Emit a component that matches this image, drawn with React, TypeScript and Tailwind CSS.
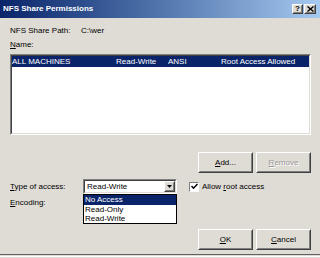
import React from 'react';

const Raised: React.FC<{ className?: string; children?: React.ReactNode }> = ({ className = '', children }) => (
  <div className={`border border-t-white border-l-white border-r-[#404040] border-b-[#404040] bg-[#dfdcd5] ${className}`}>
    <div className="w-full h-full flex items-center justify-center border border-t-[#dfdcd5] border-l-[#dfdcd5] border-r-[#808080] border-b-[#808080]">
      {children}
    </div>
  </div>
);

const Sunken: React.FC<{ className?: string; children?: React.ReactNode }> = ({ className = '', children }) => (
  <div className={`border border-t-[#808080] border-l-[#808080] border-r-white border-b-white ${className}`}>
    <div className="w-full h-full bg-white border border-t-[#404040] border-l-[#404040] border-r-[#dfdcd5] border-b-[#dfdcd5] relative">
      {children}
    </div>
  </div>
);

const Btn: React.FC<{ children: React.ReactNode; disabled?: boolean }> = ({ children, disabled }) => (
  <Raised className="w-[55px] h-[21px]">
    <span className={disabled ? 'text-[#9a9a9a] [text-shadow:1px_1px_0_#fff]' : ''}>{children}</span>
  </Raised>
);

export default function App() {
  return (
    <div className="w-[320px] h-[258px] bg-[#dfdcd5] overflow-hidden flex flex-col text-[8px] leading-[10px] text-black font-['Liberation_Sans',Arial,sans-serif]">
      {/* title bar */}
      <div className="h-[18px] shrink-0 flex items-center pl-[3px] pr-[4px] bg-gradient-to-r from-[#0a246a] to-[#a6caf0]">
        <span className="text-white font-bold text-[8px]">NFS Share Permissions</span>
        <div className="ml-auto flex gap-[1px]">
          <Raised className="w-[11px] h-[10px]">
            <span className="font-bold text-[8px] leading-[8px]">?</span>
          </Raised>
          <Raised className="w-[12px] h-[10px]">
            <svg width="7" height="6" viewBox="0 0 7 6">
              <path d="M0.5 0.5 L6.5 5.5 M6.5 0.5 L0.5 5.5" stroke="#000" strokeWidth="1.4" />
            </svg>
          </Raised>
        </div>
      </div>

      <div className="flex flex-col pl-[10px] pr-[9px]">
        <div className="mt-[8px] flex">
          <span className="w-[71px]">NFS Share Path:</span>
          <span>C:\wer</span>
        </div>
        <div className="mt-[4px]">
          <span className="underline">N</span>ame:
        </div>

        <Sunken className="mt-[4px] h-[81px]">
          <div className="h-[11px] bg-[#0a246a] text-white flex items-center">
            <span className="w-[104px]">ALL MACHINES</span>
            <span className="w-[52px]">Read-Write</span>
            <span className="w-[53px]">ANSI</span>
            <span>Root Access Allowed</span>
          </div>
        </Sunken>

        <div className="mt-[17px] flex justify-end gap-[3px]">
          <Btn>
            <span className="underline">A</span>dd...
          </Btn>
          <Btn disabled>
            <span className="underline">R</span>emove
          </Btn>
        </div>

        <div className="mt-[6px] flex items-center">
          <span className="w-[73px]">
            <span className="underline">T</span>ype of access:
          </span>
          <div className="relative">
            <Sunken className="w-[94px] h-[15px]">
              <div className="h-full flex items-center pl-[2px]">
                <span>Read-Write</span>
                <Raised className="ml-auto w-[11px] h-full">
                  <svg width="5" height="3" viewBox="0 0 5 3">
                    <path d="M0 0 H5 L2.5 3 Z" fill="#000" />
                  </svg>
                </Raised>
              </div>
            </Sunken>
            <div className="absolute left-0 top-[15px] w-[94px] bg-white border border-black flex flex-col z-10">
              <div className="h-[10px] bg-[#0a246a] text-white pl-[1px] flex items-center">No Access</div>
              <div className="h-[9px] pl-[1px] flex items-center">Read-Only</div>
              <div className="h-[9px] pl-[1px] flex items-center">Read-Write</div>
            </div>
          </div>
          <div className="ml-[12px] w-[10px] h-[10px] bg-white border border-t-[#808080] border-l-[#808080] border-r-white border-b-white flex items-center justify-center">
            <svg width="7" height="7" viewBox="0 0 7 7">
              <path d="M0.5 3 L2.5 5.2 L6.5 1" stroke="#000" strokeWidth="1.5" fill="none" />
            </svg>
          </div>
          <span className="ml-[3px]">
            Allow <span className="underline">r</span>oot access
          </span>
        </div>

        <div className="mt-[4px]">
          <span className="underline">E</span>ncoding:
        </div>

        <div className="mt-[21px] flex justify-end gap-[3px]">
          <Btn>
            <span className="underline">O</span>K
          </Btn>
          <Btn>
            <span className="underline">C</span>ancel
          </Btn>
        </div>
      </div>
      <div className="mt-[4px] border-t border-[#606060] border-b border-b-white h-[3px]" />
    </div>
  );
}
